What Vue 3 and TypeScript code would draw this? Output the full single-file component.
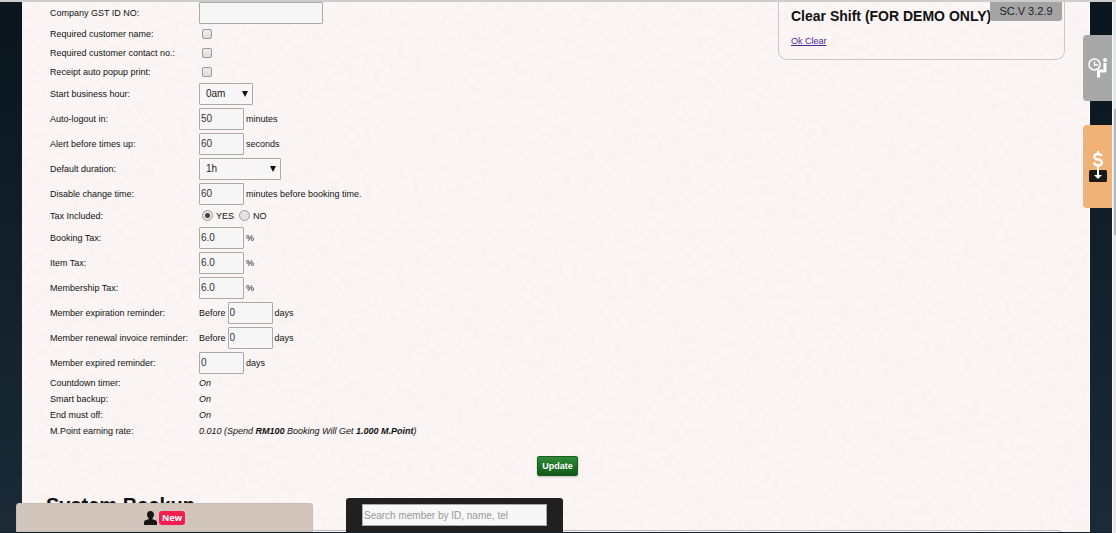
<script setup lang="ts">
import { reactive } from 'vue'

interface Row {
  id: string
  label: string
  kind: 'text' | 'check' | 'select' | 'number' | 'radio' | 'static' | 'rate'
  before?: string
  after?: string
  wide?: boolean
}

const rows: Row[] = [
  { id: 'gst', label: 'Company GST ID NO:', kind: 'text' },
  { id: 'reqName', label: 'Required customer name:', kind: 'check' },
  { id: 'reqContact', label: 'Required customer contact no.:', kind: 'check' },
  { id: 'popup', label: 'Receipt auto popup print:', kind: 'check' },
  { id: 'startHour', label: 'Start business hour:', kind: 'select' },
  { id: 'logout', label: 'Auto-logout in:', kind: 'number', after: 'minutes' },
  { id: 'alert', label: 'Alert before times up:', kind: 'number', after: 'seconds' },
  { id: 'duration', label: 'Default duration:', kind: 'select', wide: true },
  { id: 'disable', label: 'Disable change time:', kind: 'number', after: 'minutes before booking time.' },
  { id: 'taxIncluded', label: 'Tax Included:', kind: 'radio' },
  { id: 'bookingTax', label: 'Booking Tax:', kind: 'number', after: '%' },
  { id: 'itemTax', label: 'Item Tax:', kind: 'number', after: '%' },
  { id: 'memberTax', label: 'Membership Tax:', kind: 'number', after: '%' },
  { id: 'expiration', label: 'Member expiration reminder:', kind: 'number', before: 'Before', after: 'days' },
  { id: 'renewal', label: 'Member renewal invoice reminder:', kind: 'number', before: 'Before', after: 'days' },
  { id: 'expired', label: 'Member expired reminder:', kind: 'number', after: 'days' },
  { id: 'countdown', label: 'Countdown timer:', kind: 'static' },
  { id: 'backup', label: 'Smart backup:', kind: 'static' },
  { id: 'mustOff', label: 'End must off:', kind: 'static' },
  { id: 'rate', label: 'M.Point earning rate:', kind: 'rate' },
]

const values = reactive<Record<string, string>>({
  gst: '',
  startHour: '0am',
  logout: '50',
  alert: '60',
  duration: '1h',
  disable: '60',
  taxIncluded: 'YES',
  bookingTax: '6.0',
  itemTax: '6.0',
  memberTax: '6.0',
  expiration: '0',
  renewal: '0',
  expired: '0',
  countdown: 'On',
  backup: 'On',
  mustOff: 'On',
})

const checks = reactive<Record<string, boolean>>({ reqName: false, reqContact: false, popup: false })
const search = reactive({ term: '' })
</script>

<template>
  <div class="page">
    <main class="paper">
      <svg class="grain" aria-hidden="true">
        <filter id="paper-grain">
          <feTurbulence type="fractalNoise" baseFrequency="0.12" numOctaves="4" seed="7" />
          <feColorMatrix values="0 0 0 0 0.6  0 0 0 0 0.52  0 0 0 0 0.5  0.9 0 0 0 -0.38" />
        </filter>
        <rect width="100%" height="100%" filter="url(#paper-grain)" />
      </svg>

      <div class="columns">
        <form class="settings" @submit.prevent>
          <div v-for="row in rows" :key="row.id" class="row" :class="row.kind">
            <label v-if="row.kind !== 'static' && row.kind !== 'rate' && row.kind !== 'radio'" class="name" :for="row.id">{{ row.label }}</label>
            <span v-else class="name">{{ row.label }}</span>

            <div class="value">
              <span v-if="row.before">{{ row.before }}</span>
              <input v-if="row.kind === 'text'" :id="row.id" v-model="values[row.id]" class="field long" type="text" />
              <input v-else-if="row.kind === 'number'" :id="row.id" v-model="values[row.id]" class="field" type="text" />
              <input v-else-if="row.kind === 'check'" :id="row.id" v-model="checks[row.id]" class="tick" type="checkbox" />
              <span v-else-if="row.kind === 'select'" class="select-wrap" :class="{ wide: row.wide }">
                <select :id="row.id" v-model="values[row.id]">
                  <option>{{ values[row.id] }}</option>
                </select>
                <svg class="arrow" viewBox="0 0 6 6" aria-hidden="true"><path d="M0 0h6L3 6z" /></svg>
              </span>
              <template v-else-if="row.kind === 'radio'">
                <label class="choice"><input v-model="values[row.id]" type="radio" name="tax" value="YES" />YES</label>
                <label class="choice"><input v-model="values[row.id]" type="radio" name="tax" value="NO" />NO</label>
              </template>
              <em v-else-if="row.kind === 'static'">{{ values[row.id] }}</em>
              <em v-else>0.010 (Spend <b>RM100</b> Booking Will Get <b>1.000 M.Point</b>)</em>
              <span v-if="row.after">{{ row.after }}</span>
            </div>
          </div>
        </form>

        <section class="clear-shift">
          <h2>Clear Shift (FOR DEMO ONLY)</h2>
          <a href="#">Ok Clear</a>
        </section>
      </div>

      <button class="update" type="button">Update</button>
      <section class="backup">
        <h1>System Backup</h1>
        <div class="backup-box"></div>
      </section>
    </main>

    <div class="version">SC.V 3.2.9</div>

    <nav class="side">
      <button class="waiting" type="button" aria-label="Waiting list">
        <svg viewBox="0 0 20 20" aria-hidden="true">
          <g fill="none" stroke="#fff">
            <circle cx="6.500" cy="6.500" r="5.500" stroke-width="1.500" />
            <path d="M6.500 3.500v3.500h3.500" stroke-width="1.300" />
            <path d="M17 5v8h-6.500V19.500" stroke-width="3" stroke-linejoin="round" />
          </g>
          <circle cx="17" cy="2" r="2" fill="#fff" />
        </svg>
      </button>
      <button class="cash" type="button" aria-label="Cash drawer">
        <svg viewBox="0 0 20 34" aria-hidden="true">
          <rect x="1" y="20" width="18" height="12" rx="1.500" fill="#1b1918" />
          <path d="M13.500 6.200C13 4.600 11.800 4 10 4 7.900 4 6.300 5 6.300 6.700c0 3.900 7.500 1.800 7.500 5.800 0 1.800-1.500 2.900-3.800 2.900-2.100 0-3.500-.9-4-2.700" fill="none" stroke="#fff" stroke-width="2.500" />
          <path d="M10 1v3M10 15v10" stroke="#fff" stroke-width="2" />
          <path d="M6 25h8l-4 4z" fill="#fff" />
        </svg>
      </button>
    </nav>

    <div class="scrollbar"><div class="thumb"></div></div>

    <footer class="dock">
      <button class="members" type="button">
        <svg viewBox="0 0 13 14" aria-hidden="true"><path d="M6.500 0C4.300 0 3 1.600 3 3.600c0 1.500.6 2.900 1.600 3.600L4.500 8.200 1.500 9.300C.5 9.700 0 10.300 0 11.500V14h13v-2.500c0-1.200-.5-1.800-1.500-2.200l-3-1.100-.1-1C9.400 6.500 10 5.100 10 3.600 10 1.600 8.700 0 6.500 0z" /></svg>
        <span class="badge">New</span>
      </button>
      <div class="search">
        <input v-model="search.term" type="text" placeholder="Search member by ID, name, tel" aria-label="Search member" />
      </div>
    </footer>
    <div class="base"></div>
  </div>
</template>

<style>
html, body { margin: 0; height: 100%; overflow: hidden; }
</style>

<style scoped>
* { box-sizing: border-box; }

.page {
  position: relative;
  height: 100vh;
  overflow: hidden;
  padding: 0 26px 0 22px;
  border-top: 2px solid #cfcdcc;
  background: linear-gradient(#0a151d, #1a2b37);
  color: #111;
  font: 9px/12px "Liberation Sans", Arial, sans-serif;
}

.paper {
  position: relative;
  height: 100%;
  overflow: hidden;
  padding: 0 24px 0 28px;
  background: #fbf6f5;
  border-right: 1px solid #fff;
}

.grain {
  position: absolute;
  inset: 0;
  width: 100%;
  height: 100%;
  opacity: 0.2;
  pointer-events: none;
}

.columns {
  position: relative;
  display: flex;
  justify-content: space-between;
  align-items: flex-start;
}

.row {
  display: grid;
  grid-template-columns: 149px auto;
  align-items: center;
  height: 25px;
}
.row.text { height: 22px; }
.row.check, .row.radio { height: 19px; }
.row.static, .row.rate { height: 16px; }
.name { white-space: nowrap; }
.value {
  display: flex;
  align-items: center;
  gap: 2px;
  white-space: nowrap;
}

.field {
  width: 45px;
  height: 22px;
  padding: 0 1px;
  border: 1px solid #aaa;
  border-radius: 1px;
  background: #f6f6f6;
  color: #333;
  font: 10px "Liberation Sans", Arial, sans-serif;
}
.field.long { width: 124px; }

.tick {
  appearance: none;
  width: 10px;
  height: 10px;
  margin: 0 3px;
  border: 1px solid #999;
  border-radius: 2px;
  background: linear-gradient(#eee, #ddd);
}

.select-wrap {
  position: relative;
  width: 54px;
  height: 22px;
}
.select-wrap.wide { width: 82px; }
.select-wrap select {
  appearance: none;
  width: 100%;
  height: 100%;
  padding: 0 6px;
  border: 1px solid #aaa;
  border-radius: 1px;
  background: #f8f6f6;
  color: #222;
  font: 10px "Liberation Sans", Arial, sans-serif;
}
.arrow {
  position: absolute;
  top: 8px;
  right: 5px;
  width: 6px;
  height: 6px;
  fill: #111;
  pointer-events: none;
}

.choice {
  display: flex;
  align-items: center;
  gap: 3px;
  margin-left: 3px;
}
.choice input {
  appearance: none;
  width: 11px;
  height: 11px;
  margin: 0;
  border: 1px solid #999;
  border-radius: 50%;
  background: #e4e2e2;
}
.choice input:checked { background: radial-gradient(circle, #444 0 2px, #e4e2e2 3px); }

.clear-shift {
  position: relative;
  width: 287px;
  height: 58px;
  padding: 5px 12px;
  border: 1px solid #c9c6c5;
  border-top: 0;
  border-radius: 0 0 9px 9px;
  white-space: nowrap;
}
.clear-shift h2 {
  margin: 0 0 10px;
  color: #111;
  font-size: 14px;
  line-height: 18px;
}
.clear-shift a { color: #4a2594; }

.update {
  position: relative;
  display: block;
  height: 20px;
  margin: 17px auto;
  padding: 0 4px;
  border: 1px solid #1b5c23;
  border-radius: 2px;
  background: linear-gradient(#2f8a36, #11591b);
  box-shadow: 0 1px 2px #bbb;
  color: #fff;
  font: bold 9px "Liberation Sans", Arial, sans-serif;
}

.backup { position: relative; margin-left: -4px; }
.backup h1 {
  margin: 0;
  color: #111;
  font-size: 20px;
  line-height: 24px;
}
.backup-box {
  height: 40px;
  margin: 13px 0 0 4px;
  border: 1px solid #bbb;
  border-radius: 8px;
}

.version {
  position: absolute;
  top: -1px;
  right: 54px;
  width: 72px;
  height: 20px;
  border-radius: 0 0 3px 3px;
  background: #a5a4a4;
  color: #222;
  font-size: 11px;
  line-height: 20px;
  text-align: center;
}

.side {
  position: absolute;
  top: 33px;
  right: 4px;
  display: flex;
  flex-direction: column;
  gap: 24px;
  width: 29px;
}
.side button {
  display: flex;
  align-items: center;
  justify-content: center;
  width: 100%;
  padding: 0;
  border: 0;
  border-radius: 4px 0 0 4px;
}
.waiting { height: 66px; background: #a8a8a8; }
.waiting svg { width: 20px; height: 20px; }
.cash { height: 83px; background: #f1b277; }
.cash svg { width: 20px; height: 34px; }

.scrollbar {
  position: absolute;
  top: 0;
  right: 0;
  bottom: 0;
  width: 4px;
  padding-top: 107px;
  border-left: 1px solid #fff;
  background: #e6e8ea;
}
.thumb { height: 126px; margin-left: 1px; background: #b5b7b9; }

.dock {
  position: absolute;
  bottom: 1px;
  left: 16px;
  display: flex;
  align-items: flex-end;
  gap: 33px;
}
.members {
  display: flex;
  align-items: center;
  justify-content: center;
  gap: 2px;
  width: 297px;
  height: 29px;
  padding: 0;
  border: 1px solid #c9beb5;
  border-radius: 3px 3px 0 0;
  background: #d2c6bc;
}
.members svg { width: 13px; height: 14px; fill: #191716; }
.badge {
  padding: 0 3px;
  border-radius: 3px;
  background: #f51d50;
  color: #fff;
  font: bold 9px/14px "Noto Sans", sans-serif;
}
.search {
  width: 217px;
  height: 34px;
  padding: 6px 16px;
  border-radius: 3px 3px 0 0;
  background: #212020;
}
.search input {
  width: 100%;
  height: 22px;
  padding: 0 1px;
  border: 1px solid #aaa;
  background: #f7f7f7;
  color: #333;
  font: 10px "Liberation Sans", Arial, sans-serif;
}
.search input::placeholder { color: #999; opacity: 1; }

.base {
  position: absolute;
  right: 4px;
  bottom: 0;
  left: 0;
  height: 1px;
  background: #10202c;
}
</style>
